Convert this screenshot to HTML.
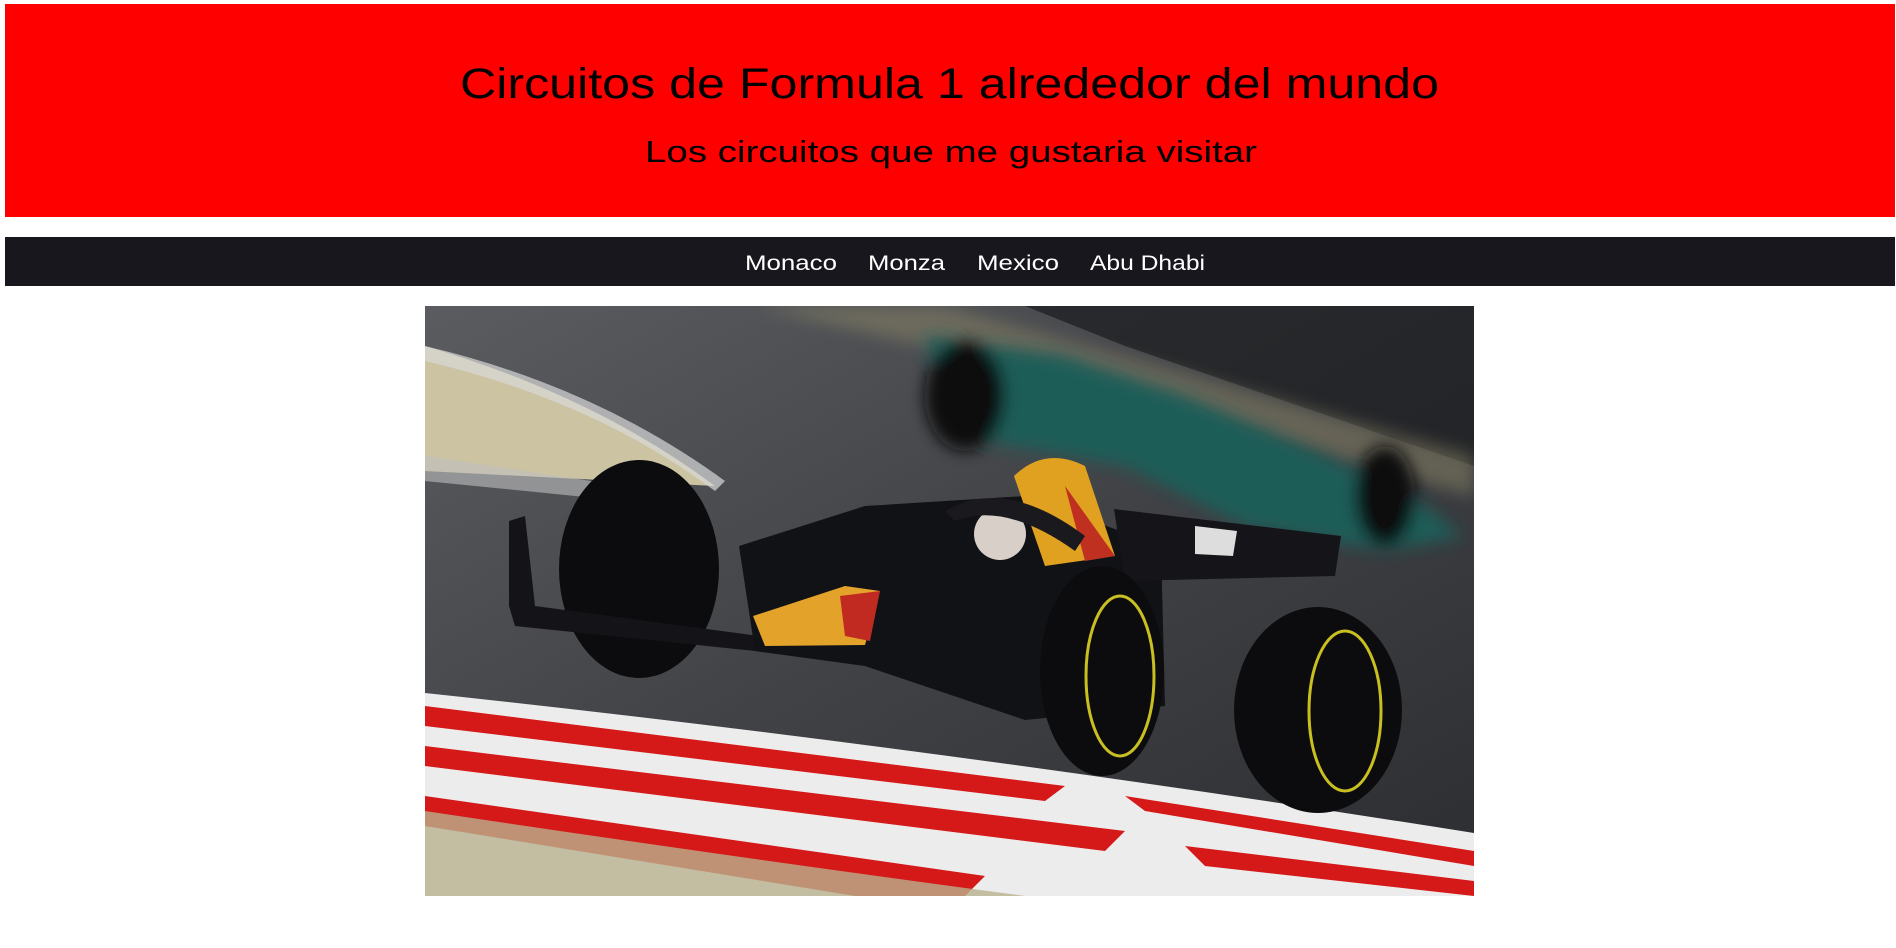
<!DOCTYPE html>
<html><head><meta charset="utf-8"><style>
html,body{margin:0;padding:0;background:#fff;width:1896px;height:948px;overflow:hidden;font-family:"Liberation Sans",sans-serif}
.bg{position:absolute;left:0;top:0}
</style></head><body>
<svg class="bg" width="1896" height="948" viewBox="0 0 1896 948" font-family="Liberation Sans, sans-serif">
<rect x="5" y="4" width="1890" height="213" fill="#ff0000"/>
<text x="460" y="98" font-size="43" textLength="979" lengthAdjust="spacingAndGlyphs" fill="#000">Circuitos de Formula 1 alrededor del mundo</text>
<text x="645" y="162" font-size="31" textLength="612" lengthAdjust="spacingAndGlyphs" fill="#000">Los circuitos que me gustaria visitar</text>
<rect x="5" y="237" width="1890" height="49" fill="#17171d"/>
<g font-size="21" fill="#fff">
<text x="745" y="270" textLength="92" lengthAdjust="spacingAndGlyphs">Monaco</text>
<text x="868" y="270" textLength="77" lengthAdjust="spacingAndGlyphs">Monza</text>
<text x="977" y="270" textLength="82" lengthAdjust="spacingAndGlyphs">Mexico</text>
<text x="1090" y="270" textLength="115" lengthAdjust="spacingAndGlyphs">Abu Dhabi</text>
</g>
<svg x="425" y="306" width="1049" height="590" viewBox="0 0 1049 590">
<defs>
<linearGradient id="g" x1="0" y1="0" x2="1" y2="1"><stop offset="0" stop-color="#5a5c60"/><stop offset="0.5" stop-color="#404246"/><stop offset="1" stop-color="#2c2d31"/></linearGradient>
<filter id="b"><feGaussianBlur stdDeviation="8"/></filter>
</defs>
<rect width="1049" height="590" fill="url(#g)"/>
<path d="M600 0 L1049 0 L1049 160 L700 40Z" fill="#1a1b1e" opacity="0.7"/>
<path d="M330 0 L520 0 L1049 150 L1049 190 L500 40Z" fill="#8d8668" opacity="0.5" filter="url(#b)"/>
<path d="M0 40 Q170 90 290 180 L0 165Z" fill="#cbc3a2"/>
<path d="M0 40 Q170 80 300 175 L290 185 Q170 95 0 55Z" fill="#d8d8d8" opacity="0.7"/>
<path d="M0 150 L200 180 L200 195 L0 175Z" fill="#bfbfbf" opacity="0.6"/>
<g filter="url(#b)">
<path d="M500 30 L640 50 L760 90 L900 150 L1000 200 L1037 230 L960 245 L820 220 L700 160 L530 130Z" fill="#1e5d58"/>
<ellipse cx="540" cy="90" rx="40" ry="55" fill="#111"/>
<ellipse cx="960" cy="190" rx="30" ry="50" fill="#111"/>
</g>
<path d="M0 387 Q500 440 1049 527 L1049 590 L0 590Z" fill="#ececec"/>
<path d="M0 400 L640 480 L620 495 L0 420Z M0 440 L700 525 L680 545 L0 460Z M0 490 L560 570 L540 590 L430 590 L0 520Z M700 490 L1049 545 L1049 560 L720 505Z M760 540 L1049 575 L1049 590 L780 560Z" fill="#d51818"/>
<path d="M0 505 Q300 550 600 590 L0 590Z" fill="#b9b18e" opacity="0.8"/>
<ellipse cx="214" cy="263" rx="80" ry="109" fill="#0c0c0e"/>
<path d="M84 215 L100 210 L110 300 L334 330 L330 345 L90 320 L84 300Z" fill="#141418"/>
<path d="M314 240 L440 200 L600 190 L736 240 L740 400 L600 414 L440 360 L330 345Z" fill="#111216"/>
<path d="M689 203 L916 230 L910 270 L700 275Z" fill="#151519"/>
<path d="M770 220 L812 225 L808 250 L770 248Z" fill="#ddd"/>
<path d="M589 170 Q620 140 660 160 L690 250 L620 260 Z" fill="#e0a020"/>
<path d="M640 180 L690 250 L660 255Z" fill="#c03020"/>
<path d="M328 310 L420 280 L455 285 L440 339 L340 340Z" fill="#e3a22a"/>
<path d="M415 290 L455 285 L445 335 L420 330Z" fill="#c02a20"/>
<circle cx="575" cy="228" r="26" fill="#d8d0c8"/>
<path d="M520 205 Q580 170 660 230 L650 245 Q580 195 530 215Z" fill="#1a1a1e"/>
<ellipse cx="677" cy="365" rx="62" ry="105" fill="#0c0c0e"/>
<ellipse cx="695" cy="370" rx="34" ry="80" fill="none" stroke="#c9c020" stroke-width="3"/>
<ellipse cx="893" cy="404" rx="84" ry="103" fill="#0c0c0e"/>
<ellipse cx="920" cy="405" rx="36" ry="80" fill="none" stroke="#c9c020" stroke-width="3"/>
</svg>
</svg>
</body></html>
